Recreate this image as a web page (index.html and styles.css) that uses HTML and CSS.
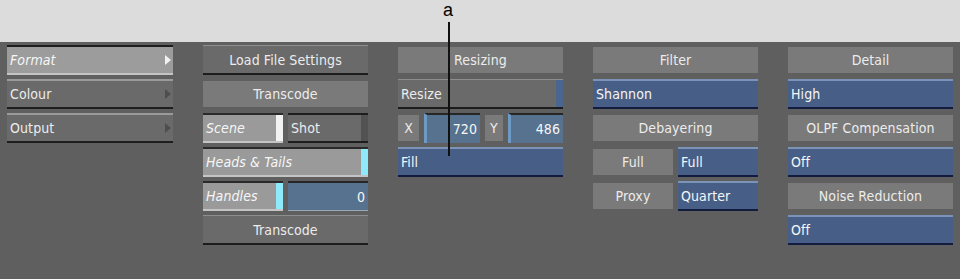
FILE: index.html
```html
<!DOCTYPE html>
<html lang="en">
<head>
  <meta charset="UTF-8">
  <title>Format Settings</title>
  <link rel="stylesheet" href="styles.css">
</head>
<body>
  <div class="topbar"></div>

  <div class="panel">
    <!-- Menu column -->
    <div class="col">
      <div class="btn menu selected"><span class="it">Format</span><span class="arrow"></span></div>
      <div class="btn menu"><span>Colour</span><span class="arrow"></span></div>
      <div class="btn menu"><span>Output</span><span class="arrow"></span></div>
    </div>

    <!-- Transcode column -->
    <div class="col">
      <div class="btn raised center">Load File Settings</div>
      <div class="label">Transcode</div>
      <div class="row">
        <div class="btn toggle on w80"><span class="it">Scene</span><span class="strip white"></span></div>
        <div class="btn toggle off w80"><span>Shot</span><span class="strip dark"></span></div>
      </div>
      <div class="btn toggle on"><span class="it">Heads &amp; Tails</span><span class="strip cyan"></span></div>
      <div class="row">
        <div class="btn toggle on w80"><span class="it">Handles</span><span class="strip cyan"></span></div>
        <div class="btn input w80">0</div>
      </div>
      <div class="btn raised center">Transcode</div>
    </div>

    <!-- Resizing column -->
    <div class="col">
      <div class="label">Resizing</div>
      <div class="btn raised split"><span>Resize</span><span class="strip blue"></span></div>
      <div class="row">
        <div class="label w21">X</div>
        <div class="btn input num w56">720</div>
        <div class="label w18">Y</div>
        <div class="btn input num w55">486</div>
      </div>
      <div class="btn field">Fill</div>
    </div>

    <!-- Filter column -->
    <div class="col">
      <div class="label">Filter</div>
      <div class="btn field">Shannon</div>
      <div class="label">Debayering</div>
      <div class="row">
        <div class="label w80">Full</div>
        <div class="btn field w80">Full</div>
      </div>
      <div class="row">
        <div class="label w80">Proxy</div>
        <div class="btn field w80">Quarter</div>
      </div>
    </div>

    <!-- Detail column -->
    <div class="col">
      <div class="label">Detail</div>
      <div class="btn field">High</div>
      <div class="label">OLPF Compensation</div>
      <div class="btn field">Off</div>
      <div class="label">Noise Reduction</div>
      <div class="btn field">Off</div>
    </div>
  </div>

  <!-- Callout -->
  <div class="callout">
    <span class="callout-letter">a</span>
    <span class="callout-line"></span>
  </div>
</body>
</html>
```

FILE: styles.css
```css
/* Global Styles */
body {
  margin: 0;
  padding: 0;
  background-color: #5f5f5f;
  font-family: "DejaVu Sans Condensed", "DejaVu Sans", sans-serif;
  font-size: 14px;
  letter-spacing: 0.1px;
  color: #ececec;
  width: 960px;
  height: 279px;
  overflow: hidden;
  position: relative;
}

.topbar {
  height: 42px;
  background-color: #dcdcdc;
}

.panel {
  display: grid;
  grid-template-columns: 166px 165px 165px 165px 165px;
  column-gap: 30px;
  padding: 3px 7px 0 7px;
}

.col {
  display: flex;
  flex-direction: column;
  gap: 4px;
}

.row {
  display: flex;
  gap: 5px;
  height: 30px;
}

.w80 { width: 80px; }
.w21 { width: 21px; }
.w18 { width: 18px; }
.w56 { width: 56px; }
.w55 { width: 55px; }

.it {
  font-style: italic;
}

/* Base button */
.btn {
  box-sizing: border-box;
  height: 30px;
  display: flex;
  align-items: center;
  padding: 0 3px;
  position: relative;
  white-space: nowrap;
}

.center {
  justify-content: center;
}

/* Raised grey button */
.raised {
  background-color: #6a6a6a;
  border-top: 1px solid #8e8e8e;
  border-bottom: 2px solid #1c1c1c;
}

/* Flat header label */
.label {
  box-sizing: border-box;
  height: 26px;
  margin: 2px 0;
  background-color: #7a7a7a;
  display: flex;
  align-items: center;
  justify-content: center;
  white-space: nowrap;
}

/* Menu items */
.menu {
  justify-content: space-between;
  background-color: #6a6a6a;
  border-top: 2px solid #9a9a9a;
  border-bottom: 2px solid #1e1e1e;
  padding-right: 2px;
}

.menu.selected {
  background-color: #9c9c9c;
  border-top: 2px solid #1e1e1e;
  border-bottom: 2px solid #c4c4c4;
  color: #f6f6f6;
}

.arrow {
  width: 0;
  height: 0;
  border-top: 5px solid transparent;
  border-bottom: 5px solid transparent;
  border-left: 6px solid #4e4e4e;
}

.menu.selected .arrow {
  border-left-color: #f2f2f2;
}

/* Toggle buttons with side strip */
.toggle {
  padding-right: 0;
  justify-content: space-between;
}

.toggle.on {
  background-color: #9a9a9a;
  border-top: 2px solid #2a2a2a;
  border-bottom: 2px solid #c4c4c4;
  color: #f6f6f6;
}

.toggle.off {
  background-color: #6a6a6a;
  border-top: 2px solid #1e1e1e;
  border-bottom: 2px solid #1e1e1e;
}

.strip {
  width: 7px;
  align-self: stretch;
}

.strip.white { background-color: #f2f2f2; }
.strip.cyan { background-color: #8ee9fa; }
.strip.dark { background-color: #525252; }
.strip.blue { background-color: #4a6590; }

.split {
  justify-content: space-between;
  padding-right: 0;
}

/* Blue value fields */
.field {
  background-color: #475f86;
  border-top: 2px solid #7b93b6;
  border-bottom: 2px solid #131b3e;
  color: #f6f6f6;
}

/* Numeric inputs */
.input {
  justify-content: flex-end;
  background-color: #56728f;
  border-top: 2px solid #262626;
  border-bottom: 1px solid #9aa8b8;
  color: #f6f6f6;
}

.input.num {
  border-left: 3px solid #6d9ac4;
  border-bottom: none;
}

/* Callout */
.callout {
  position: absolute;
  left: 440px;
  top: 0;
  width: 20px;
  height: 160px;
}

.callout-letter {
  position: absolute;
  left: 3px;
  top: 0;
  font-family: "Liberation Sans", Arial, sans-serif;
  font-size: 18px;
  line-height: normal;
  letter-spacing: 0;
  color: #000;
}

.callout-line {
  position: absolute;
  left: 8px;
  top: 22px;
  width: 2px;
  height: 134px;
  background-color: #111;
}
```
